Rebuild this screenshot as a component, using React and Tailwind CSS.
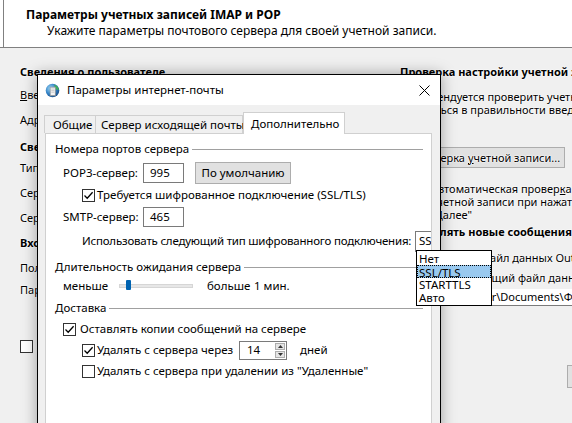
import React from 'react';

// Windows 10 style check box
const CheckBox = ({ checked }) => (
  <span className="flex h-[13px] w-[13px] shrink-0 items-center justify-center border border-[#333] bg-white">
    {checked && (
      <svg width="11" height="11" viewBox="0 0 11 11">
        <path d="M1.5 5.5 L4.2 8.2 L9.6 2.2" fill="none" stroke="#000" strokeWidth="1.3" />
      </svg>
    )}
  </span>
);

const GroupHeader = ({ title, className = '' }) => (
  <div className={`flex h-[16px] items-center whitespace-nowrap ${className}`}>
    <span className="pr-[3px]">{title}</span>
    <span className="h-px flex-1 bg-[#a0a0a0]" />
  </div>
);

const Field = ({ value, className = '' }) => (
  <div className={`flex shrink-0 items-center border border-[#7a7a7a] bg-white pl-[6px] ${className}`}>{value}</div>
);

const MailGlobe = () => (
  <svg width="15" height="15" viewBox="0 0 15 15">
    <defs>
      <radialGradient id="globe" cx="35%" cy="35%" r="70%">
        <stop offset="0" stopColor="#9fd7f5" />
        <stop offset="0.6" stopColor="#2f7fc4" />
        <stop offset="1" stopColor="#1c4f8a" />
      </radialGradient>
    </defs>
    <circle cx="7.5" cy="7.5" r="6.8" fill="url(#globe)" />
    <path d="M9 1.6 C12 2.6 13.8 5 13.9 7.2 L10.5 6 Z" fill="#3fae5a" />
    <path d="M5.2 4.2 H10.4 V12.6 H5.2 Z" fill="#f4f4f4" stroke="#8a8a8a" strokeWidth="0.7" />
    <path d="M6.2 6 H9.4 M6.2 7.6 H9.4 M6.2 9.2 H9.4" stroke="#b0b0b0" strokeWidth="0.6" />
  </svg>
);

const leftLabels = [
  { text: 'Сведения о пользователе', bold: true, mt: 'mt-[16px]' },
  { text: 'Введите имя:', underline: true, mt: 'mt-[7px]' },
  { text: 'Адрес электронной почты:', mt: 'mt-[9px]' },
  { text: 'Сведения о сервере', bold: true, mt: 'mt-[11px]' },
  { text: 'Тип учетной записи:', mt: 'mt-[5px]' },
  { text: 'Сервер входящей почты:', mt: 'mt-[9px]' },
  { text: 'Сервер исходящей почты (SMTP):', mt: 'mt-[9px]' },
  { text: 'Вход в систему', bold: true, mt: 'mt-[9px]' },
  { text: 'Пользователь:', mt: 'mt-[9px]' },
  { text: 'Пароль:', mt: 'mt-[6px]' },
];

const encryptionTypes = ['Нет', 'SSL/TLS', 'STARTTLS', 'Авто'];

export default function App() {
  return (
    <div className="relative h-[423px] w-[572px] overflow-hidden bg-[#f0f0f0] font-['Segoe_UI','Noto_Sans',sans-serif] text-[12px] leading-[16px] text-black">
      {/* Account settings window header */}
      <div className="h-[48px] border-b border-[#808080] bg-white pl-[3px]">
        <div className="h-full border-l border-[#808080] pl-[22px] pt-[7px] whitespace-nowrap">
          <div className="font-bold">Параметры учетных записей IMAP и POP</div>
          <div className="pl-[21px]">Укажите параметры почтового сервера для своей учетной записи.</div>
        </div>
      </div>

      {/* Account settings window body */}
      <div className="flex pl-[20px] text-[11px] whitespace-nowrap [text-shadow:0_0_2px_#fff,0_0_2px_#fff,0_0_1px_#fff]">
        <div className="flex w-[380px] shrink-0 flex-col">
          {leftLabels.map((l) => (
            <div key={l.text} className={`${l.mt} ${l.bold ? 'font-bold' : ''}`}>
              {l.underline ? (
                <>
                  <span className="underline">В</span>
                  {l.text.slice(1)}
                </>
              ) : (
                l.text
              )}
            </div>
          ))}
          <div className="mt-[40px] flex items-center gap-[4px]">
            <CheckBox />
            <span>Безопасная проверка пароля (SPA)</span>
          </div>
        </div>

        <div className="flex w-[172px] shrink-0 flex-col">
          <div className="mt-[16px] font-bold">Проверка настройки учетной записи</div>
          <div className="mt-[10px] pl-[4px] leading-[13px]">
            Рекомендуется проверить учетную запись, чтобы
            <br />
            убедиться в правильности введенных данных.
          </div>
          <div className="mt-[31px] flex h-[21px] w-[165px] shrink-0 items-center border border-[#adadad] bg-[#e1e1e1] pl-[12px]">
            Проверка <span className="ml-[3px] underline">у</span>четной записи...
          </div>
          <div className="mt-[14px] flex">
            <span className="mt-[1px] ml-[13px] mr-[5px]">
              <CheckBox checked />
            </span>
            <div className="leading-[13px]">
              Автоматическая провер<span className="underline">к</span>а
              <br />
              учетной записи при нажатии
              <br />
              "Далее"
            </div>
          </div>
          <div className="mt-[3px] font-bold">Доставлять новые сообщения:</div>
          <div className="mt-[10px] pl-[43px]">Новый файл данных Outlook</div>
          <div className="mt-[4px] pl-[32px]">Существующий файл данных Outlook</div>
          <div className="mt-[3px] ml-[18px] flex h-[17px] w-[200px] shrink-0 items-center overflow-hidden border-b border-[#7a7a7a] bg-white pl-[8px]">
            C:\Users\user\Documents\Файлы Outlook\
          </div>
          <div className="mt-[59px] ml-[167px] flex h-[23px] w-[120px] shrink-0 items-center border border-[#adadad] bg-[#e1e1e1] pl-[10px]">
            Дополнительно
          </div>
        </div>
      </div>

      {/* Internet mail settings dialog */}
      <div className="absolute left-[37px] top-[74px] h-[362px] w-[404px] whitespace-nowrap border border-black bg-[#f0f0f0] text-[11.5px] shadow-[0_0_14px_rgba(0,0,0,0.35)]">
        <div className="flex h-[30px] items-center bg-white pl-[7px]">
          <MailGlobe />
          <span className="ml-[7px]">Параметры интернет-почты</span>
          <svg className="ml-auto mr-[10px]" width="11" height="11" viewBox="0 0 11 11">
            <path d="M0.5 0.5 L10.5 10.5 M10.5 0.5 L0.5 10.5" stroke="#000" strokeWidth="1" />
          </svg>
        </div>

        {/* tabs */}
        <div className="mt-[7px] flex h-[21px] items-end pl-[6px]">
          <div className="flex h-[18px] w-[52px] items-center border border-b-0 border-[#d0d0d0] pl-[8px]">Общие</div>
          <div className="flex h-[18px] w-[147px] items-center border border-b-0 border-l-0 border-[#d0d0d0] pl-[5px]">
            Сервер исходящей почты
          </div>
          <div className="relative z-10 -mb-px flex h-[22px] w-[102px] items-center border border-b-0 border-[#d0d0d0] bg-white pl-[7px]">
            Дополнительно
          </div>
        </div>

        {/* tab page */}
        <div className="ml-[7px] h-[300px] w-[387px] overflow-hidden border border-[#d0d0d0] bg-white pl-[9px] pr-[8px] pt-[7px]">
          <GroupHeader title="Номера портов сервера" />
          <div className="mt-[5px] flex h-[22px] items-center">
            <span className="ml-[8px] w-[80px] shrink-0">POP3-сервер:</span>
            <Field value="995" className="h-[20px] w-[41px]" />
            <div className="ml-[11px] flex h-[22px] w-[96px] shrink-0 items-center justify-center border border-[#adadad] bg-[#e1e1e1]">
              По умолчанию
            </div>
          </div>
          <div className="mt-[4px] flex h-[14px] items-center">
            <span className="ml-[27px] mr-[2px]">
              <CheckBox checked />
            </span>
            Требуется шифрованное подключение (SSL/TLS)
          </div>
          <div className="mt-[5px] flex h-[20px] items-center">
            <span className="ml-[8px] w-[80px] shrink-0">SMTP-сервер:</span>
            <Field value="465" className="h-[20px] w-[41px]" />
          </div>
          <div className="mt-[3px] flex h-[22px] items-center">
            <span className="ml-[27px] w-[333px] shrink-0 tracking-[-0.2px]">
              Использовать следующий тип шифрованного подключения:
            </span>
            <div className="flex h-[21px] w-[70px] shrink-0 items-center border border-[#7a7a7a] bg-white pl-[3px]">
              SSL/TLS
            </div>
          </div>

          <GroupHeader title="Длительность ожидания сервера" className="mt-[7px]" />
          <div className="mt-[3px] flex h-[16px] items-center">
            <span className="ml-[8px] w-[56px] shrink-0">меньше</span>
            <div className="relative h-[4px] w-[74px] shrink-0 border border-[#d6d6d6] bg-[#e7e7e7]">
              <span className="absolute left-[6px] top-[-5px] h-[10px] w-[5px] rounded-[1px] bg-[#0063b1]" />
            </div>
            <span className="ml-[14px] w-[47px] shrink-0">больше</span>
            <span>1 мин.</span>
          </div>

          <GroupHeader title="Доставка" className="mt-[6px]" />
          <div className="mt-[6px] flex h-[14px] items-center">
            <span className="ml-[8px] mr-[4px]">
              <CheckBox checked />
            </span>
            Оставлять копии сообщений на сервере
          </div>
          <div className="mt-[4px] flex h-[20px] items-center">
            <span className="ml-[27px] mr-[2px]">
              <CheckBox checked />
            </span>
            <span className="w-[142px] shrink-0">Удалять с сервера через</span>
            <div className="flex h-[19px] w-[48px] shrink-0 items-center border border-[#7a7a7a] bg-white">
              <span className="flex-1 pl-[7px]">14</span>
              <div className="mr-px flex h-[15px] w-[10px] flex-col gap-px">
                <span className="flex flex-1 items-center justify-center border border-[#adadad] bg-[#e5e5e5]">
                  <svg width="5" height="3" viewBox="0 0 5 3"><path d="M0 3 L2.5 0 L5 3 Z" fill="#333" /></svg>
                </span>
                <span className="flex flex-1 items-center justify-center border border-[#adadad] bg-[#e5e5e5]">
                  <svg width="5" height="3" viewBox="0 0 5 3"><path d="M0 0 L2.5 3 L5 0 Z" fill="#333" /></svg>
                </span>
              </div>
            </div>
            <span className="ml-[13px]">дней</span>
          </div>
          <div className="mt-[4px] flex h-[14px] items-center">
            <span className="ml-[27px] mr-[2px]">
              <CheckBox />
            </span>
            Удалять с сервера при удалении из "Удаленные"
          </div>
        </div>
      </div>

      {/* open encryption type list */}
      <div className="absolute left-[416px] top-[250px] w-[76px] border border-black bg-white py-px text-[11.5px] leading-[13px]">
        {encryptionTypes.map((t) => (
          <div
            key={t}
            className={`h-[13px] pl-[2px] ${t === 'SSL/TLS' ? 'border border-dotted border-black bg-[#99c9ef] pl-px' : ''}`}
          >
            {t}
          </div>
        ))}
      </div>
    </div>
  );
}
